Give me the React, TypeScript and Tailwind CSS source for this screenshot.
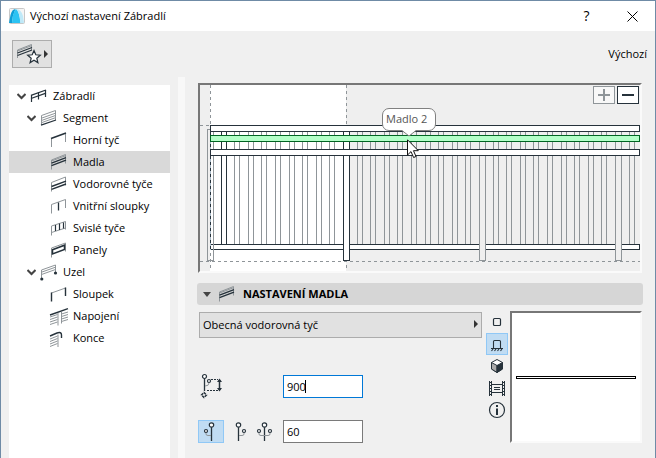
import { useState, type ReactNode } from "react";

const INK = "#26323b";
const GRAY = "#8f9599";

function Svg({ children, w = 20, h = 20 }: { children: ReactNode; w?: number; h?: number }) {
  return (
    <svg width={w} height={h} viewBox={`0 0 ${w} ${h}`} fill="none" stroke={INK} className="shrink-0 overflow-visible" aria-hidden="true">
      {children}
    </svg>
  );
}

const icons: Record<string, ReactNode> = {
  railing: (
    <>
      <path d="M0.5 16V9M7.5 13.500V6M14.5 11V4" strokeWidth="1.2" />
      <path d="M0 9.300L15 4M0 12.500L15 7.200" strokeWidth="1.300" />
    </>
  ),
  segment: (
    <>
      <path d="M0.5 17V7.500L14.500 2.500V12" stroke={GRAY} />
      <path d="M1 10L15 5M1 12.300L15 7.300M1 14.500L15 9.500" stroke={GRAY} />
      <path d="M0 17.200L15 12" strokeWidth="1.300" />
    </>
  ),
  top: (
    <>
      <path d="M0.500 17V9M14.500 12V4" stroke={GRAY} />
      <path d="M0 8.500L15 3" strokeWidth="1.500" />
    </>
  ),
  rails: (
    <>
      <path d="M0.500 17.500V8L14.500 2.500V11.500" stroke={GRAY} />
      <path d="M0.500 9L15 3.500" stroke={GRAY} />
      <path d="M0.500 11.200L15 5.700M0.500 13.700L15 8.200" strokeWidth="1.400" />
    </>
  ),
  horizontal: (
    <>
      <path d="M0.500 17.500V8.500L14.500 3V11.500" stroke={GRAY} />
      <path d="M0.500 12.500L15 7.200M0.500 15.300L15 10" strokeWidth="1.400" />
    </>
  ),
  inner: (
    <>
      <path d="M0.500 17.500V8.500L14.500 3.500V12" stroke={GRAY} />
      <path d="M7.500 14.500V6.500" strokeWidth="1.300" />
    </>
  ),
  vertical: (
    <>
      <path d="M0.500 17.500V8L14.500 3.500V11.500M0.500 14.500L14.500 10" stroke={GRAY} />
      <path d="M4.500 13V7M8.500 12V5.500M12.500 10.500V4.500" strokeWidth="1.200" />
    </>
  ),
  panels: (
    <>
      <path d="M0.500 17.500V8L14.500 3V11.500" stroke={GRAY} />
      <path d="M1.500 9.800L13.500 5.200V9.500L1.500 14Z" strokeWidth="1.500" />
    </>
  ),
  node: (
    <>
      <path d="M0.500 16V8L14.500 3V10M0.500 10.200L14.500 5.200M0.500 12.500L14.500 7.500" stroke={GRAY} />
      <circle cx="0.800" cy="17" r="1.600" fill={INK} stroke="none" />
      <circle cx="14.500" cy="11" r="1.600" fill={INK} stroke="none" />
    </>
  ),
  post: (
    <>
      <path d="M0.500 9L14.500 4" stroke={GRAY} />
      <path d="M0.500 17.500V8.500M14.500 12V3.500" strokeWidth="1.400" />
    </>
  ),
  joint: (
    <>
      <path d="M-1 11L6.500 8.500M-1 13.500L6.500 11M-1 16L6.500 13.500M-1 18.500L6.500 16M10.500 8L17 6M10.500 10.500L17 8.500M10.500 13L17 11M10.500 15.500L17 13.500" stroke={GRAY} />
      <path d="M7 19.500V7M10.500 17.500V6" stroke={GRAY} />
      <path d="M-1 9L17 2.700" strokeWidth="1.400" />
    </>
  ),
  end: (
    <>
      <path d="M-1 11L6.500 8M-1 13.500L6.500 10.500M-1 16L6.500 13M-1 18.500L6.500 15.500M7 19V6.500" stroke={GRAY} />
      <path d="M-1 8L6 5Q10.500 3.500 10.500 7V10" strokeWidth="1.400" />
    </>
  ),
};

type Item = { label: string; icon: string; level: number };
const tree: Item[] = [
  { label: "Zábradlí", icon: "railing", level: 0 },
  { label: "Segment", icon: "segment", level: 1 },
  { label: "Horní tyč", icon: "top", level: 2 },
  { label: "Madla", icon: "rails", level: 2 },
  { label: "Vodorovné tyče", icon: "horizontal", level: 2 },
  { label: "Vnitřní sloupky", icon: "inner", level: 2 },
  { label: "Svislé tyče", icon: "vertical", level: 2 },
  { label: "Panely", icon: "panels", level: 2 },
  { label: "Uzel", icon: "node", level: 1 },
  { label: "Sloupek", icon: "post", level: 2 },
  { label: "Napojení", icon: "joint", level: 2 },
  { label: "Konce", icon: "end", level: 2 },
];

function Tree() {
  const [selected, setSelected] = useState("Madla");
  const indent = ["pl-2", "pl-[18px]", "pl-7"];
  return (
    <nav className="w-[161px] shrink-0 bg-white mt-2">
      {tree.map((t) => (
        <button
          key={t.label}
          onClick={() => setSelected(t.label)}
          className={`flex h-[22px] w-full items-center text-left ${indent[t.level]} ${selected === t.label ? "bg-[#d9d9d9]" : ""}`}
        >
          <span className="flex w-[14px] shrink-0">
            {t.level < 2 && (
              <svg width="9" height="7" viewBox="0 0 9 7" fill="none" stroke="#444" strokeWidth="2" aria-hidden="true">
                <path d="M0.500 1L4.500 5L8.500 1" />
              </svg>
            )}
          </span>
          <span className="flex w-[22px] shrink-0">
            <Svg>{icons[t.icon]}</Svg>
          </span>
          <span className="whitespace-nowrap">{t.label}</span>
        </button>
      ))}
    </nav>
  );
}

const posts = [207, 343, 479, 615];
const barOffsets = [14, 27, 41, 54, 68, 82, 95, 109, 122];

function RailingView() {
  return (
    <svg width="440" height="186" viewBox="200 85 440 186" fill="none" shapeRendering="crispEdges" role="img" aria-label="Náhled zábradlí">
      <rect x="210" y="85" width="136" height="186" fill="#fff" />
      <path d="M210.500 85V271M346.500 85V271M200 261.500H640M200 125.500H210" stroke="#8f9599" strokeDasharray="3 3" />
      {posts.map((p) =>
        barOffsets.map((o) => {
          const x = p + o;
          if (x > 640) return null;
          return (
            <path
              key={x}
              d={`M${x + 0.5} 132V244M${x + 5.5} 132V244`}
              stroke={x === 221 ? "#26323b" : "#8f9599"}
            />
          );
        })
      )}
      <rect x="210.500" y="244.500" width="429" height="5" fill="#fff" stroke="#26323b" />
      <path d="M207.500 129V261M213.500 132V261M207 129.500H211M207 260.500H214" stroke="#8f9599" />
      <rect x="343.500" y="128.500" width="6" height="132" fill="#fff" stroke="#26323b" />
      <rect x="479.500" y="128.500" width="6" height="132" fill="#efefef" stroke="#8f9599" />
      <rect x="615.500" y="128.500" width="6" height="132" fill="#efefef" stroke="#8f9599" />
      <path d="M210.500 132V250" stroke="#a9b9c6" />
      <path d="M210.500 132V250" stroke="#26323b" strokeDasharray="3 3" />
      <rect x="210.500" y="125.500" width="429" height="6" fill="#fff" stroke="#26323b" />
      <rect x="210.500" y="135.500" width="429" height="6" fill="#b3ffc8" stroke="#006422" />
      <rect x="210.500" y="149.500" width="429" height="6" fill="#fff" stroke="#26323b" />
    </svg>
  );
}

const sunken = "border-2 border-t-[#777] border-l-[#777] border-b-[#fafafa] border-r-[#fafafa]";

function Preview() {
  return (
    <div className={`relative mr-[13px] ml-[13px] mt-[6px] h-[190px] overflow-hidden bg-[#efefef] ${sunken}`}>
      <RailingView />
      <div className="absolute right-px top-px flex gap-[2px]">
        <button aria-label="Přidat" className="flex h-[18px] w-[22px] items-center justify-center border border-[#8f9599] bg-[#f8f8f8]">
          <Svg w={12} h={12}><path d="M0 6H12M6 0V12" stroke={GRAY} strokeWidth="2" /></Svg>
        </button>
        <button aria-label="Odebrat" className="flex h-[18px] w-[22px] items-center justify-center border border-[#26323b] bg-white">
          <Svg w={12} h={12}><path d="M0 6H12" strokeWidth="2" /></Svg>
        </button>
      </div>
      <div role="tooltip" className="absolute left-[182px] top-[23px] flex h-[23px] w-[54px] items-center rounded-[7px] border border-[#808080] bg-white pl-[3px] text-[11px] text-[#555]">
        <span className="whitespace-nowrap">Madlo 2</span>
        <svg width="16" height="8" viewBox="0 0 16 8" className="absolute left-[18px] top-[20px]" aria-hidden="true">
          <path d="M1 0V1.500L8 7L15 1.500V0Z" fill="#fff" />
          <path d="M1 1.500L8 7L15 1.500" fill="none" stroke="#808080" />
        </svg>
      </div>
      <svg width="13" height="20" viewBox="0 0 13 20" className="absolute left-[207px] top-[54px]" aria-hidden="true">
        <path d="M0.500 0.800V16L4 12.600L6.600 18.500L9 17.500L6.500 11.700H11.300Z" fill="#fff" stroke="#111" />
      </svg>
    </div>
  );
}

const circle = (x: number, y: number, r: number) => <circle cx={x} cy={y} r={r} fill="#fff" strokeWidth="1.200" />;

function SideIcons() {
  const cell = "flex h-[22px] w-[22px] items-center justify-center border";
  const off = "border-transparent";
  return (
    <div className="ml-1 flex w-[22px] flex-col shrink-0">
      <button aria-label="Půdorys" className={`${cell} ${off}`}>
        <Svg><rect x="6.500" y="6.500" width="7" height="7" rx="1" strokeWidth="1.200" /></Svg>
      </button>
      <button aria-label="Pohled" className={`${cell} border-[#90c8f6] bg-[#c0dcf3]`}>
        <Svg><path d="M6.500 14V7.500Q6.500 6.500 7.500 6.500H12.500Q13.500 6.500 13.500 7.500V14M4 14.500H16M6 15L4.500 17M9 15L7.500 17M12 15L10.500 17M15 15L13.500 17" strokeWidth="1.100" /></Svg>
      </button>
      <button aria-label="3D" className={`${cell} ${off}`}>
        <Svg>
          <path d="M10 3.500L15.500 6.500V13L10 16.500L4.500 13V6.500Z" fill="#fff" />
          <path d="M4.500 6.500L10 9.500V16.500L4.500 13Z" fill="#aaa" />
          <path d="M10 9.500L15.500 6.500V13L10 16.500Z" fill={INK} />
        </Svg>
      </button>
      <button aria-label="Řez" className={`${cell} ${off}`}>
        <Svg>
          <path d="M2.500 3V18M4.500 3V18M15.500 3V18M17.500 3V18M5 6.500H15M5 14.500H15" />
          <path d="M2 4.500H5M2 7.500H5M2 10.500H5M2 13.500H5M2 16.500H5M15 4.500H18M15 7.500H18M15 10.500H18M15 13.500H18M15 16.500H18M7 9.500H13M7 11.500H13" />
        </Svg>
      </button>
      <button aria-label="Informace" className={`${cell} ${off}`}>
        <Svg>
          <circle cx="10" cy="10" r="7.500" strokeWidth="1.200" />
          <path d="M10 8.500V15M10 5V7" strokeWidth="2" />
        </Svg>
      </button>
    </div>
  );
}

const field = "h-[23px] w-20 bg-white px-[3px] text-[11px] text-black outline-none border";

function Settings() {
  const [side, setSide] = useState(0);
  const sides = [
    { name: "Vlevo", art: <><path d="M10.500 4V19" strokeWidth="1.300" /><path d="M5 10V12Q5 13.500 7 13.500H10" stroke={GRAY} />{circle(10.5, 3, 2.2)}{circle(5, 9, 1.5)}</> },
    { name: "Vpravo", art: <><path d="M10.500 4V19" strokeWidth="1.300" /><path d="M16 10V12Q16 13.500 14 13.500H11" stroke={GRAY} />{circle(10.5, 3, 2.2)}{circle(16, 9, 1.5)}</> },
    { name: "Oboustranně", art: <><path d="M9.500 4V19" strokeWidth="1.300" /><path d="M4 10V12Q4 13.500 6 13.500H13Q15 13.500 15 12V10" stroke={GRAY} />{circle(9.5, 3, 2.2)}{circle(4, 9, 1.5)}{circle(15, 9, 1.5)}</> },
  ];
  return (
    <div className="mx-[13px] mt-[6px] flex">
      <div className="min-w-0 flex-1 pl-px pt-px">
        <div className="relative">
          <select aria-label="Typ madla" className="block h-[26px] w-full appearance-none border border-[#acacac] bg-[#e1e1e1] px-[3px] text-[11px] text-black">
            <option>Obecná vodorovná tyč</option>
          </select>
          <svg width="4" height="8" viewBox="0 0 4 8" className="pointer-events-none absolute right-1 top-2" aria-hidden="true">
            <path d="M0 0L4 4L0 8Z" fill="#333" />
          </svg>
        </div>
        <div className="mt-9 flex items-center">
          <label htmlFor="height" aria-label="Výška" className="flex w-[84px]">
            <Svg w={24} h={25}>
              <path d="M5.500 4V17" strokeWidth="1.300" />
              <path d="M10 8V9Q10 12 6 12" stroke={GRAY} />
              <path d="M12 5.500H19M8 16.500H19" strokeDasharray="2 1" />
              <path d="M20.500 6V16" strokeWidth="1.500" />
              <path d="M20.500 4.500L23 8H18ZM20.500 17.500L23 14H18Z" fill={INK} stroke="none" />
              <path d="M5 18.500L7.500 21L5 23.500L2.500 21Z" strokeDasharray="2.500 1" strokeWidth="1.500" />
              {circle(5.5, 2.5, 2)}{circle(10, 7, 1.5)}
            </Svg>
          </label>
          <div className="relative flex">
            <input id="height" defaultValue="900" className={`${field} border-[#0078d7]`} />
            <span className="pointer-events-none absolute left-[22px] top-[5px] h-[13px] w-px bg-black" />
          </div>
        </div>
        <div className="mt-[21px] flex items-center">
          <div className="-ml-px flex w-[85px] gap-px">
            {sides.map((s, i) => (
              <button
                key={s.name}
                aria-label={s.name}
                onClick={() => setSide(i)}
                className={`flex h-[23px] w-[26px] items-center justify-center border ${side === i ? "border-[#90c8f6] bg-[#c0dcf3]" : "border-transparent"}`}
              >
                <Svg w={20} h={19}>{s.art}</Svg>
              </button>
            ))}
          </div>
          <input aria-label="Odsazení" defaultValue="60" className={`${field} border-[#7a7a7a]`} />
        </div>
      </div>
      <SideIcons />
      <div className={`ml-[2px] flex h-[132px] w-[132px] shrink-0 items-center bg-white px-1 ${sunken}`}>
        <div className="h-[3px] w-full border border-black" />
      </div>
    </div>
  );
}

export default function App() {
  return (
    <div className="flex h-screen flex-col overflow-hidden border-x border-t border-[#6f8ba6] bg-[#f0f0f0] font-['Open_Sans','Noto_Sans',sans-serif] text-[11px] text-black">
      <header className="flex h-[30px] shrink-0 items-center bg-white pl-2">
        <svg width="16" height="16" viewBox="0 0 16 16" aria-hidden="true">
          <rect x="0.500" y="0.500" width="15" height="15" rx="1" fill="#f5f5f5" stroke="#c8c8c8" />
          <path d="M0 15L1.500 7Q3 1 6.500 1Q3.500 7 3 15Z" fill="#0e9fd8" />
          <path d="M3 15Q3.500 5 7 1Q10 2 11.500 15Z" fill="#2cc3f3" />
          <path d="M7 1Q12 1 14 8L15 15H11.500Q10.500 4 7 1Z" fill="#bfe9f8" />
        </svg>
        <h1 className="ml-[5px] flex-1">Výchozí nastavení Zábradlí</h1>
        <button aria-label="Nápověda" className="w-[45px] text-center text-sm">?</button>
        <button aria-label="Zavřít" className="flex w-[46px] justify-center">
          <Svg w={11} h={11}><path d="M0.500 0.500L10.500 10.500M10.500 0.500L0.500 10.500" stroke="#000" /></Svg>
        </button>
      </header>
      <div className="flex shrink-0 items-center justify-between py-[9px] pl-[11px] pr-2">
        <button aria-label="Oblíbené" className="flex h-7 w-10 items-center border border-[#adadad] bg-[#e1e1e1] pl-1">
          <Svg w={26} h={22}>
            <path d="M0.500 15V7L14.500 1.500V7M0.500 8L15 2.500" stroke={GRAY} />
            <path d="M0.500 10L15 4.500M0.500 12.500L15 7" strokeWidth="1.300" />
            <path d="M17 7.500L18.800 11.800L23.300 12.200L19.800 15.200L20.900 19.600L17 17.200L13.100 19.600L14.200 15.200L10.700 12.200L15.200 11.800Z" fill="#fff" strokeWidth="1.200" />
          </Svg>
          <svg width="4" height="8" viewBox="0 0 4 8" className="ml-px" aria-hidden="true"><path d="M0 0L4 4L0 8Z" fill="#333" /></svg>
        </button>
        <span>Výchozí</span>
      </div>
      <div className="flex min-h-0 flex-1 pl-2">
        <Tree />
        <div className="ml-2 w-[7px] shrink-0 bg-[#f8f8f8]" />
        <main className="min-w-0 flex-1">
          <Preview />
          <h2 className="mx-3 mt-[10px] flex h-[22px] items-center rounded-[3px] bg-[#d6d6d6] pl-[6px] font-bold">
            <svg width="8" height="5" viewBox="0 0 8 5" aria-hidden="true"><path d="M0 0H8L4 5Z" fill="#444" /></svg>
            <span className="ml-2 flex w-[24px]"><Svg>{icons.rails}</Svg></span>
            NASTAVENÍ MADLA
          </h2>
          <Settings />
        </main>
      </div>
    </div>
  );
}
